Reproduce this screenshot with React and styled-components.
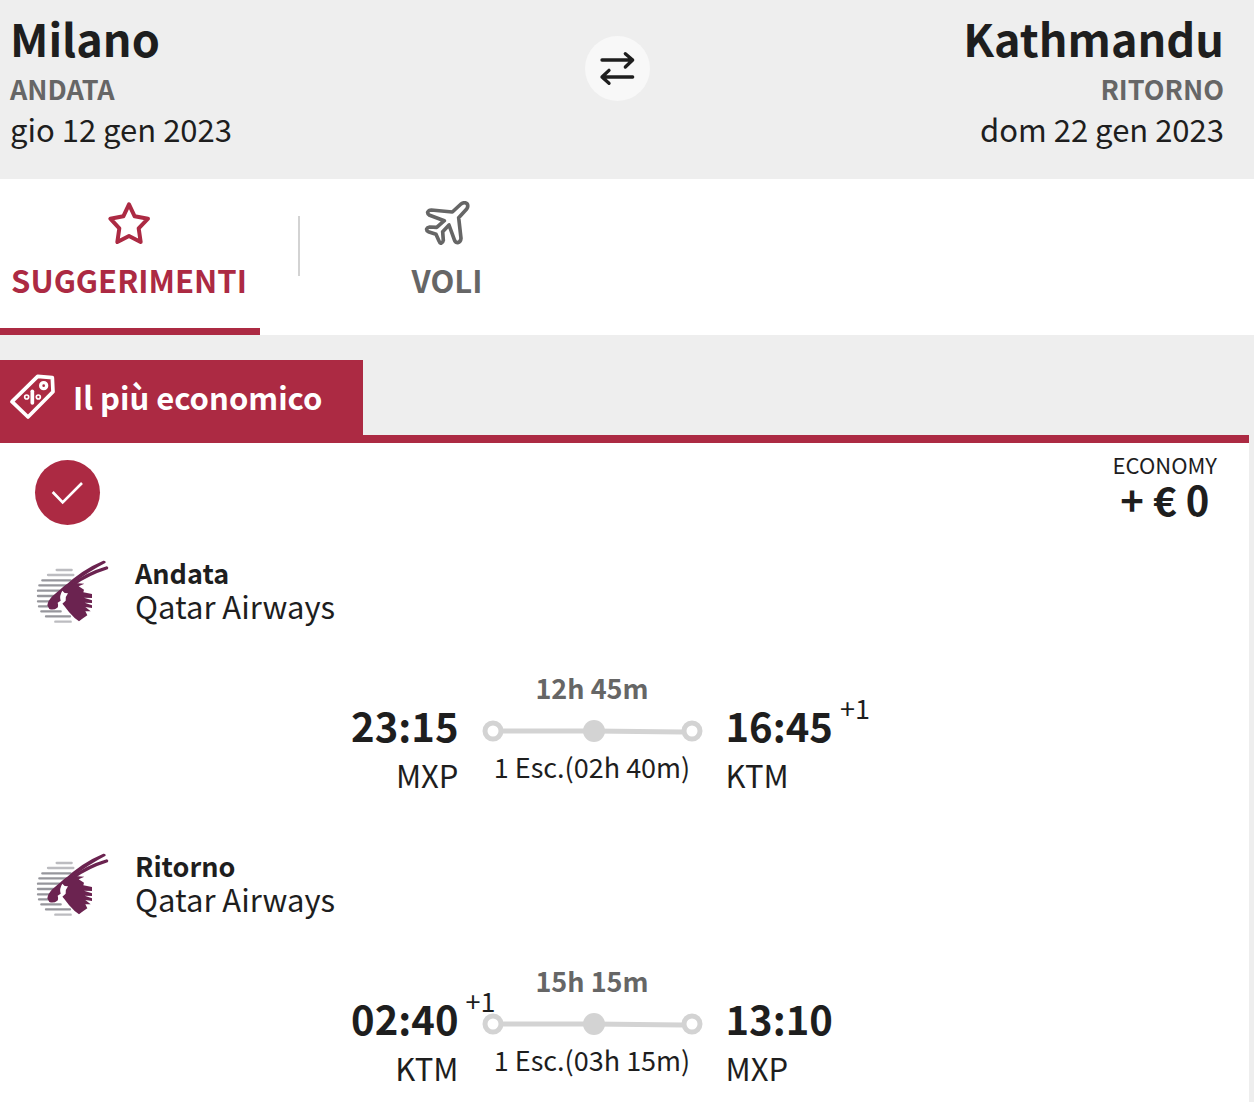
import React, { useState } from 'react';

import styled, { createGlobalStyle } from 'styled-components';

const RED = '#ac2a43';
const INK = '#1e1e1e';
const GREY = '#666666';
const RAIL = '#d3d3d3';

const GlobalStyle = createGlobalStyle`
  * {
    box-sizing: border-box;
  }

  body {
    margin: 0;
    background: #eeeeee;
    color: ${INK};
    font-family: 'Noto Sans CJK SC', 'Noto Sans', sans-serif;
  }

  button {
    padding: 0;
    border: 0;
    background: none;
    font-family: inherit;
    cursor: pointer;
  }
`;

const Header = styled.header`
  display: grid;
  grid-template-columns: 1fr auto 1fr;
  padding: 8px 30px 31px 10px;
`;

const Place = styled.div`
  text-align: ${({ $end }) => ($end ? 'right' : 'left')};
`;

const City = styled.h1`
  margin: 0;
  font-size: 45px;
  line-height: 60px;
`;

const Direction = styled.div`
  color: ${GREY};
  font-size: 27px;
  font-weight: bold;
  line-height: 42px;
`;

const TravelDate = styled.div`
  font-size: 31px;
  line-height: 38px;
`;

const SwapButton = styled.button`
  width: 65px;
  height: 65px;
  margin-top: 28px;
  border-radius: 50%;
  background: #f8f8f8;

  svg {
    display: block;
  }
`;

const Tabs = styled.nav`
  display: flex;
  background: #ffffff;
`;

const Tab = styled.button`
  display: flex;
  flex-direction: column;
  align-items: center;
  gap: 19px;
  width: ${({ $wide }) => ($wide ? '294px' : '258px')};
  padding: 22px 0 32px;
  color: ${({ $active }) => ($active ? RED : GREY)};
  font-size: 31px;
  font-weight: bold;
  line-height: 32px;
`;

const TabSlot = styled.div`
  border-bottom: 7px solid ${({ $active }) => ($active ? RED : 'transparent')};
  padding-right: ${({ $active }) => ($active ? '2px' : '0')};
`;

const TabDivider = styled.div`
  width: 2px;
  height: 60px;
  margin: 37px 0 0 38px;
  background: ${RAIL};
`;

const Offer = styled.section`
  margin: 25px 5px 0 0;
`;

const OfferHead = styled.div`
  display: flex;
  border-bottom: 8px solid ${RED};
`;

const OfferLabel = styled.h2`
  display: flex;
  align-items: center;
  gap: 17px;
  height: 75px;
  margin: 0;
  padding: 0 41px 2px 10px;
  background: ${RED};
  color: #ffffff;
  font-size: 31px;
  line-height: 32px;
`;

const OfferBody = styled.div`
  padding: 7px 32px 2px 35px;
  background: #ffffff;
`;

const FareRow = styled.div`
  display: flex;
  justify-content: space-between;
  margin-bottom: 30px;
`;

const SelectButton = styled.button`
  width: 65px;
  height: 65px;
  margin-top: 10px;
  border-radius: 50%;
  background: ${RED};

  svg {
    display: block;
  }
`;

const Fare = styled.div`
  text-align: center;
`;

const Cabin = styled.div`
  font-size: 22px;
  line-height: 28px;
`;

const Price = styled.div`
  font-size: 40px;
  font-weight: bold;
  line-height: 42px;
`;

const LegBlock = styled.article`
  margin-bottom: 48px;
`;

const Carrier = styled.div`
  display: flex;
  gap: 25px;
  margin-bottom: 43px;
`;

const LegName = styled.h3`
  margin: 0;
  font-size: 27px;
  line-height: 36px;
`;

const CarrierName = styled.div`
  font-size: 31px;
  line-height: 30px;
`;

const Route = styled.div`
  display: grid;
  grid-template-columns: 1fr auto 1fr;
  gap: 23px;
  padding-right: 68px;
`;

const Stop = styled.div`
  padding-top: 27px;
  font-size: 40px;
  line-height: 50px;
  text-align: ${({ $end }) => ($end ? 'right' : 'left')};
`;

const Time = styled.span`
  position: relative;
  font-weight: bold;
`;

const DayShift = styled.sup`
  position: absolute;
  top: 0;
  left: 100%;
  padding-left: 7px;
  font-size: 27px;
  font-weight: normal;
  line-height: 24px;
`;

const Airport = styled.div`
  font-size: 31px;
`;

const Middle = styled.div`
  text-align: center;
  font-size: 27px;
  line-height: 30px;

  svg {
    display: block;
    margin: 17px 0 10px;
  }
`;

const Duration = styled.div`
  color: ${GREY};
  font-weight: bold;
`;

function SwapIcon() {
  return (
    <svg width="65" height="65" viewBox="44 48 195 195" fill="none" stroke={INK} strokeWidth="10" strokeLinecap="round" strokeLinejoin="round">
      <path d="M95 120H187M165 101L187 120L165 141" />
      <path d="M187 171H95M116 151L95 171L116 190" />
    </svg>
  );
}

function StarIcon() {
  return (
    <svg width="44" height="44" viewBox="320 63 132 132" fill="none" stroke="currentColor" strokeWidth="12" strokeLinejoin="round">
      <path d="M386 73L403 109L443 116L415 145L421 186L386 168L351 186L357 145L330 116L369 109Z" />
    </svg>
  );
}

function PlaneIcon() {
  return (
    <svg width="46" height="44" viewBox="73 30 138 132" fill="none" stroke="currentColor" strokeWidth="11" strokeLinejoin="round">
      <path d="M158 63L184 39Q195 32 202 38Q207 45 201 54L177 80L184 142Q183 153 174 155Q168 155 165 149L148 102L129 122L131 148Q130 155 124 157Q120 156 118 150L109 130L86 122Q80 119 81 114Q83 109 90 108L111 109L134 89L90 73Q83 69 84 64Q87 57 95 57Z" />
    </svg>
  );
}

function TagIcon() {
  return (
    <svg width="46" height="46" viewBox="30 58 138 138" fill="none" stroke="currentColor">
      <path d="M36 141L113 65L157 69L159 111L84 187Z" strokeWidth="11" strokeLinejoin="round" />
      <circle cx="131" cy="93" r="9" strokeWidth="10" />
      <path d="M97 110V145" strokeWidth="11" strokeLinecap="round" />
      <circle cx="80" cy="127" r="6" strokeWidth="5" />
      <circle cx="115" cy="127" r="6" strokeWidth="5" />
    </svg>
  );
}

function CheckIcon() {
  return (
    <svg width="65" height="65" viewBox="45 30 195 195" fill="none" stroke="#ffffff" strokeWidth="8">
      <path d="M98 126L128 157L186 99" />
    </svg>
  );
}

// Oryx head over a striped disc
function QatarLogo() {
  return (
    <svg width="75" height="75" viewBox="45 15 225 225" role="img" aria-label="Qatar Airways">
      <g stroke="#96969c" strokeWidth="7" strokeLinecap="round">
        <path d="M110 60H155M84 75H160" stroke="#bcbcc0" />
        <path d="M67 91H152M58 106H138M54 122H118M54 138H104M54 154H92M57 169H88M64 184H122M78 199H150" />
        <path d="M106 215H152" stroke="#bcbcc0" />
      </g>
      <g fill="#6b2350">
        <path d="M130 112Q183 60 250 32Q258 31 257 38Q205 65 156 102Z" />
        <path d="M148 106Q195 68 260 49Q268 52 263 58Q207 76 164 106Z" />
        <path d="M82 166Q84 152 97 139L130 110Q147 96 165 99L193 101L176 109L192 119L190 127L216 132V144L192 143L216 151V159L194 158L216 166V174L196 171L212 184L196 184L202 196L190 204L177 214L164 204Q146 187 133 168L126 160L112 173Q101 182 88 177Z" />
      </g>
      <path d="M127 122L134 129L144 130Q136 139 137 152L127 161L113 177Q116 164 113 158L122 152Q117 138 127 122Z" fill="#ffffff" />
    </svg>
  );
}

function RouteLine() {
  return (
    <svg width="221" height="22" viewBox="0 0 221 22" fill="none" stroke={RAIL}>
      <path d="M21 11L112 11L200 12" strokeWidth="5" />
      <circle cx="11" cy="11" r="8" strokeWidth="5" fill="#ffffff" />
      <circle cx="112" cy="11" r="11" fill={RAIL} stroke="none" />
      <circle cx="210" cy="11" r="8" strokeWidth="5" fill="#ffffff" />
    </svg>
  );
}

const legs = [
  {
    name: 'Andata',
    carrier: 'Qatar Airways',
    duration: '12h 45m',
    layover: '1 Esc.(02h 40m)',
    from: { time: '23:15', airport: 'MXP' },
    to: { time: '16:45', airport: 'KTM', shift: '+1' },
  },
  {
    name: 'Ritorno',
    carrier: 'Qatar Airways',
    duration: '15h 15m',
    layover: '1 Esc.(03h 15m)',
    from: { time: '02:40', airport: 'KTM', shift: '+1' },
    to: { time: '13:10', airport: 'MXP' },
  },
];

function RouteStop({ stop, end }) {
  return (
    <Stop $end={end}>
      <Time>
        {stop.time}
        {stop.shift && <DayShift>{stop.shift}</DayShift>}
      </Time>
      <Airport>{stop.airport}</Airport>
    </Stop>
  );
}

function Leg({ leg }) {
  return (
    <LegBlock>
      <Carrier>
        <QatarLogo />
        <div>
          <LegName>{leg.name}</LegName>
          <CarrierName>{leg.carrier}</CarrierName>
        </div>
      </Carrier>
      <Route>
        <RouteStop stop={leg.from} end />
        <Middle>
          <Duration>{leg.duration}</Duration>
          <RouteLine />
          {leg.layover}
        </Middle>
        <RouteStop stop={leg.to} />
      </Route>
    </LegBlock>
  );
}

export default function App() {
  const [tab, setTab] = useState('suggerimenti');

  return (
    <>
      <GlobalStyle />
      <Header>
        <Place>
          <City>Milano</City>
          <Direction>ANDATA</Direction>
          <TravelDate>gio 12 gen 2023</TravelDate>
        </Place>
        <SwapButton type="button" aria-label="Inverti">
          <SwapIcon />
        </SwapButton>
        <Place $end>
          <City>Kathmandu</City>
          <Direction>RITORNO</Direction>
          <TravelDate>dom 22 gen 2023</TravelDate>
        </Place>
      </Header>
      <Tabs>
        <TabSlot $active={tab === 'suggerimenti'}>
          <Tab type="button" $active={tab === 'suggerimenti'} onClick={() => setTab('suggerimenti')}>
            <StarIcon />
            SUGGERIMENTI
          </Tab>
        </TabSlot>
        <TabDivider />
        <TabSlot $active={tab === 'voli'}>
          <Tab type="button" $wide $active={tab === 'voli'} onClick={() => setTab('voli')}>
            <PlaneIcon />
            VOLI
          </Tab>
        </TabSlot>
      </Tabs>
      <Offer>
        <OfferHead>
          <OfferLabel>
            <TagIcon />
            Il più economico
          </OfferLabel>
        </OfferHead>
        <OfferBody>
          <FareRow>
            <SelectButton type="button" aria-label="Selezionato" aria-pressed="true">
              <CheckIcon />
            </SelectButton>
            <Fare>
              <Cabin>ECONOMY</Cabin>
              <Price>+ € 0</Price>
            </Fare>
          </FareRow>
          {legs.map((leg) => (
            <Leg key={leg.name} leg={leg} />
          ))}
        </OfferBody>
      </Offer>
    </>
  );
}
